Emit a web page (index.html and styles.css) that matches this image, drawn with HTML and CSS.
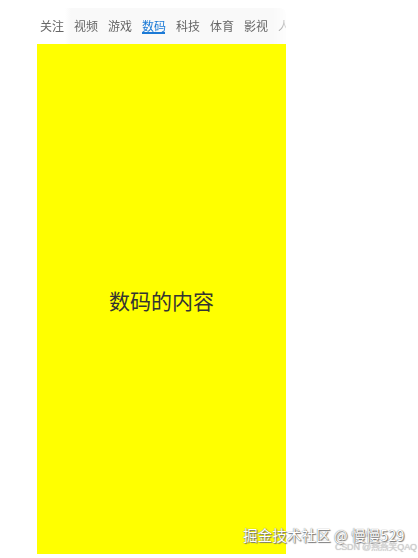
FILE: index.html
```html
<!DOCTYPE html>
<html lang="zh">
<head>
<meta charset="utf-8">
<link rel="stylesheet" href="styles.css">
</head>
<body>
<div class="page">
  <div class="phone">
    <div class="tabs">
      <div class="tab">关注</div>
      <div class="tab">视频</div>
      <div class="tab">游戏</div>
      <div class="tab active">数码</div>
      <div class="tab">科技</div>
      <div class="tab">体育</div>
      <div class="tab">影视</div>
      <div class="tab">人文</div>
    </div>
    <div class="content">数码的内容</div>
  </div>
  <div class="wm">
    <div class="wm-main">掘金技术社区 @ 慢慢529</div>
    <div class="wm-sub">CSDN @燕燕笑QAQ</div>
  </div>
</div>
</body>
</html>
```

FILE: styles.css
```css
html, body {
  margin: 0;
  padding: 0;
  background: #fff;
  font-family: "Noto Sans CJK SC", "Noto Sans", sans-serif;
}
.page {
  position: relative;
  width: 418px;
  height: 558px;
  padding-left: 37px;
  box-sizing: border-box;
}
.phone {
  width: 249px;
  display: flex;
  flex-direction: column;
}
.tabs {
  margin-top: 8px;
  height: 36px;
  display: flex;
  gap: 10px;
  padding-left: 3px;
  overflow: hidden;
  white-space: nowrap;
  background: linear-gradient(to right, #fff 0, #fff 28px, #f9f9f9 34px);
  border-top-right-radius: 6px;
  -webkit-mask-image: linear-gradient(to right, #000 235px, rgba(0,0,0,0.25) 249px);
}
.tab {
  flex: none;
  font-size: 12px;
  line-height: 16px;
  padding-top: 10px;
  height: 26px;
  box-sizing: border-box;
  color: #666;
  position: relative;
}
.tab.active {
  color: #1b7ad6;
}
.tab.active::after {
  content: "";
  position: absolute;
  left: 0;
  right: 1px;
  top: 24px;
  height: 2px;
  background: #1b7ad6;
}
.content {
  height: 510px;
  background: #ffff00;
  display: flex;
  align-items: center;
  justify-content: center;
  font-size: 21px;
  color: #333;
  padding-top: 2px;
  box-sizing: border-box;
}
.wm {
  position: absolute;
  left: 243px;
  top: 524px;
}
.wm-main {
  font-size: 14.6px;
  line-height: 22px;
  color: #fff;
  text-shadow: 0 0 1px #555, 1px 1px 1px #777;
  white-space: nowrap;
}
.wm-sub {
  position: absolute;
  left: 92px;
  top: 17px;
  font-family: "Liberation Sans", "Noto Sans CJK SC", sans-serif;
  font-size: 9px;
  letter-spacing: -0.2px;
  line-height: 12px;
  color: #d0d0d0;
  text-shadow: 0 0 1px #bbb;
  white-space: nowrap;
}
```
